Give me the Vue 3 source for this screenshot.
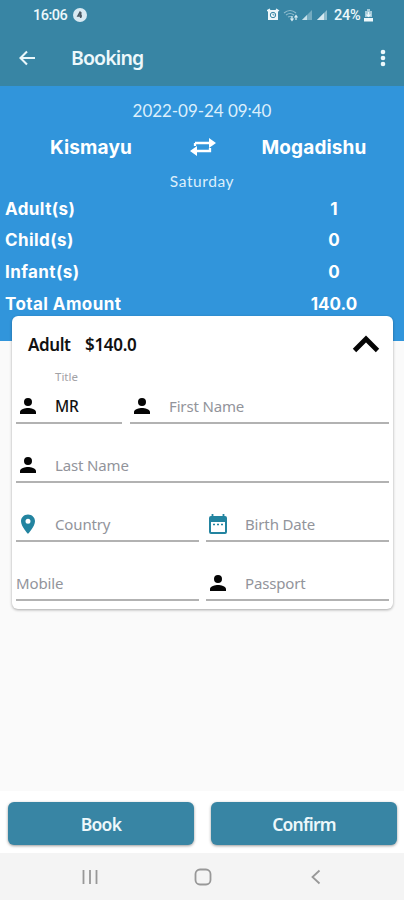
<script setup>
const counts = [
  { label: 'Adult(s)', value: '1', cls: 'adult' },
  { label: 'Child(s)', value: '0', cls: 'child' },
  { label: 'Infant(s)', value: '0', cls: 'infant' },
  { label: 'Total Amount', value: '140.0', cls: 'total' },
]
const rows = [
  { cls: 'name', fields: [{ icon: 'person', text: 'MR', caption: 'Title', filled: true }, { icon: 'person', text: 'First Name' }] },
  { cls: 'single', fields: [{ icon: 'person', text: 'Last Name' }] },
  { cls: 'pair', fields: [{ icon: 'pin', text: 'Country' }, { icon: 'calendar', text: 'Birth Date' }] },
  { cls: 'pair', fields: [{ icon: '', text: 'Mobile' }, { icon: 'person', text: 'Passport' }] },
]
</script>

<template>
  <div class="screen">
    <header>
      <div class="status">
        <span class="clock">16:06</span>
        <svg class="badge" width="14" height="14" viewBox="0 0 14 14"><circle cx="7" cy="7" r="7" fill="#d9eaf3" /><path d="M7.500 3.500 5 8h4M7.700 4v6" fill="none" stroke="#4b5965" stroke-width="1.600" /></svg>
        <svg class="signals" width="62" height="14" viewBox="0 0 62 14">
          <path d="M1 2h10v10H1z" fill="#eef7fa" /><path d="M0 3l3-2M12 3L9 1" stroke="#eef7fa" stroke-width="1.500" />
          <circle cx="6" cy="7" r="2.700" fill="none" stroke="#3885a4" stroke-width="1" /><path d="M6 5.500V7h1.500" fill="none" stroke="#3885a4" stroke-width=".8" />
          <g fill="none" stroke="#8fbccd" stroke-width="1.200"><path d="M17 5q6-5 12 0M19 7q4-3 8 0M21 9q2-1 4 0" /></g>
          <path d="M25 8v4M23.500 10.500 25 12.500l1.500-2M29 12V8M27.500 9.500 29 7.500l1.500 2" fill="none" stroke="#d9edf4" stroke-width="1.200" />
          <path d="M35 12 45 2v10z" fill="#74abc0" /><path d="M35 12l5-5v5z" fill="#c7e0ea" />
          <path d="M50 12 60 2v10z" fill="#8dbbcc" /><path d="M50 12l7-7v7z" fill="#d8eaf1" />
        </svg>
        <span class="percent">24%</span>
        <svg class="battery" width="9" height="13" viewBox="0 0 9 13"><path d="M3 0h3v2h2v6H1V2h2z" fill="#a5cbda" /><path d="M4.500 3v4M2.500 5.500l2 2 2-2" fill="none" stroke="#eef8fb" stroke-width="1.200" /><path d="M0 9h9v3.500H0z" fill="#eef8fb" /></svg>
      </div>
      <div class="appbar">
        <svg width="17" height="16" viewBox="0 0 17 16"><path d="M16 8H2M8 1.500 1.500 8 8 14.500" fill="none" stroke="#e9f6fa" stroke-width="2.100" /></svg>
        <h1>Booking</h1>
        <svg class="more" width="6" height="18" viewBox="0 0 6 18" fill="#edf8fb"><circle cx="3" cy="3" r="2.300" /><circle cx="3" cy="9" r="2.300" /><circle cx="3" cy="15" r="2.300" /></svg>
      </div>
    </header>

    <section class="trip">
      <div class="date">2022-09-24 09:40</div>
      <div class="route">
        <span class="from">Kismayu</span>
        <svg width="28" height="20" viewBox="0 0 28 20"><path d="M6 6h15M7 14h14v-3M6 6v3" fill="none" stroke="#fff" stroke-width="2.300" /><path d="M20 1l7 5-7 5zM8 9l-7 5 7 5z" fill="#fff" /></svg>
        <span class="to">Mogadishu</span>
      </div>
      <div class="day">Saturday</div>
      <div class="counts">
        <div v-for="c in counts" :key="c.label" class="count" :class="c.cls"><span class="label">{{ c.label }}</span><span class="value">{{ c.value }}</span></div>
      </div>
    </section>

    <section class="card">
      <div class="cardhead">
        <span class="who">Adult</span><span class="price">$140.0</span>
        <svg width="28" height="18" viewBox="0 0 28 18"><path d="M2.500 15.500 14 4l11.500 11.500" fill="none" stroke="#050505" stroke-width="4.800" /></svg>
      </div>
      <div v-for="(row, i) in rows" :key="i" class="row" :class="row.cls">
        <div v-for="f in row.fields" :key="f.text" class="field" :class="{ filled: f.filled }">
          <span v-if="f.caption" class="caption">{{ f.caption }}</span>
          <div class="entry">
            <svg v-if="f.icon === 'person'" class="icon" width="24" height="24" viewBox="0 0 24 24"><path d="M12 12a4 4 0 1 0 0-8 4 4 0 0 0 0 8zm0 2c-2.700 0-8 1.300-8 4v2h16v-2c0-2.700-5.300-4-8-4z" fill="#050505" /></svg>
            <svg v-else-if="f.icon === 'pin'" class="icon" width="24" height="24" viewBox="0 0 24 24"><path d="M12 2.500C8.130 2.500 5 5.400 5 9.300c0 5.100 7 12.700 7 12.700s7-7.600 7-12.700c0-3.900-3.130-6.800-7-6.800zm0 9.300a2.500 2.500 0 1 1 0-5 2.500 2.500 0 0 1 0 5z" fill="#2384a0" /></svg>
            <svg v-else-if="f.icon === 'calendar'" class="icon" width="24" height="24" viewBox="0 0 24 24"><path d="M5 4h14q2 0 2 2v14q0 2-2 2H5q-2 0-2-2V6q0-2 2-2zm0 6v10h14V10z" fill="#2384a0" fill-rule="evenodd" /><path d="M6.500 2v3M17.500 2v3" stroke="#2384a0" stroke-width="1.800" /><path d="M7 12.500h2M11 12.500h2M15 12.500h2" stroke="#2384a0" stroke-width="1.500" /></svg>
            <span>{{ f.text }}</span>
          </div>
        </div>
      </div>
    </section>

    <footer><button class="book">Book</button><button class="confirm">Confirm</button></footer>
    <nav>
      <svg width="16" height="16" viewBox="0 0 16 16"><path d="M1.500 1v14M8 1v14M14.500 1v14" stroke="#989898" stroke-width="1.800" /></svg>
      <svg width="18" height="18" viewBox="0 0 18 18"><rect x="1.500" y="1.500" width="15" height="15" rx="4.500" fill="none" stroke="#989898" stroke-width="1.800" /></svg>
      <svg width="10" height="16" viewBox="0 0 10 16"><path d="M8.500 1.500 1.500 8l7 6.500" fill="none" stroke="#989898" stroke-width="1.800" /></svg>
    </nav>
  </div>
</template>

<style>
body { margin: 0; }
</style>
<style scoped>
* { box-sizing: border-box; }
.screen { width: 404px; height: 900px; display: flex; flex-direction: column; background: #fafafa; font-family: "Noto Sans", sans-serif; overflow: hidden; white-space: nowrap; }
svg { display: block; flex: none; }
header { height: 86px; background: #3885a4; color: #edf8fb; flex: none; }
.status { height: 30px; display: flex; align-items: center; padding-left: 33px; font-family: Roboto, sans-serif; font-size: 14.500px; }
.clock { width: 40px; letter-spacing: -0.5px; font-weight: 500; }
.signals { margin-left: 180px; }
.percent { width: 30px; margin-left: 5px; font-size: 14.500px; letter-spacing: -0.2px; font-weight: 500; }
.appbar { height: 56px; display: flex; align-items: center; padding: 0 18px 0 19px; }
h1 { margin: 0 0 0 35px; font-size: 19.500px; line-height: 26px; font-weight: 600; letter-spacing: -0.900px; }
.more { margin-left: auto; }
.trip { height: 255px; flex: none; background: #3195db; color: #fff; font-family: Inter, sans-serif; padding-top: 14px; }
.date { height: 22px; line-height: 22px; font-family: Lato, sans-serif; font-size: 17px; text-align: center; color: #dceffc; letter-spacing: -0.050px; }
.route { height: 49px; display: grid; grid-template-columns: 182px 42px 180px; align-items: center; justify-items: center; font-size: 19px; font-weight: 700; letter-spacing: 0.15px; }
.from, .to { padding-top: 1px; }
.day { height: 21px; line-height: 21px; font-family: Lato, sans-serif; text-align: center; color: #dceffc; font-size: 15.500px; letter-spacing: 0.6px; }
.counts { display: flex; flex-direction: column; padding-top: 0.7px; }
.count { height: 31.700px; display: grid; grid-template-columns: 264px 140px; align-items: center; font-size: 17px; font-weight: 700; letter-spacing: 0.42px; }
.label { padding-left: 5px; }
.value { text-align: center; letter-spacing: 0; }
.card { width: 381px; height: 293px; margin: -25px 0 0 12px; background: #fff; border-radius: 6px; box-shadow: 0 1px 3px #0005; padding: 0 4px; flex: none; position: relative; }
.cardhead { height: 49px; display: flex; align-items: center; padding: 8px 9px 0 12px; font-size: 17px; font-weight: 600; color: #111; }
.who { width: 57px; letter-spacing: -0.4px; }
.price { letter-spacing: -0.3px; }
.cardhead svg { margin: 0 0 2px auto; }
.row { height: 59px; display: grid; column-gap: 8px; }
.name { grid-template-columns: 106px 259px; }
.single { grid-template-columns: 373px; }
.pair { grid-template-columns: 183px 183px; column-gap: 7px; }
.field { border-bottom: 2px solid #b2b2b2; display: flex; flex-direction: column; justify-content: flex-end; }
.caption { font-size: 11.500px; line-height: 14px; color: #a2a2a6; padding-left: 39px; margin-bottom: 8px; }
.entry { display: flex; align-items: center; height: 28px; color: #92949b; font-size: 15px; letter-spacing: -0.15px; margin-bottom: 2px; }
.icon { margin-right: 15px; }
.filled .entry { color: #111; font-weight: 500; font-size: 15.500px; letter-spacing: -0.3px; }
footer { height: 62px; margin-top: auto; background: #fff; padding: 11px 8px 7px; display: grid; grid-template-columns: 186px 186px; gap: 17px; flex: none; }
button { border: 0; height: 43px; border-radius: 6px; background: #3885a4; color: #edf8fb; font: 600 17.500px "Noto Sans", sans-serif; letter-spacing: -0.75px; box-shadow: 0 1px 3px #0006; padding: 0; }
nav { height: 47px; background: #f4f4f4; display: grid; grid-template-columns: 180px 46px 180px; align-items: center; justify-items: center; flex: none; }
</style>
